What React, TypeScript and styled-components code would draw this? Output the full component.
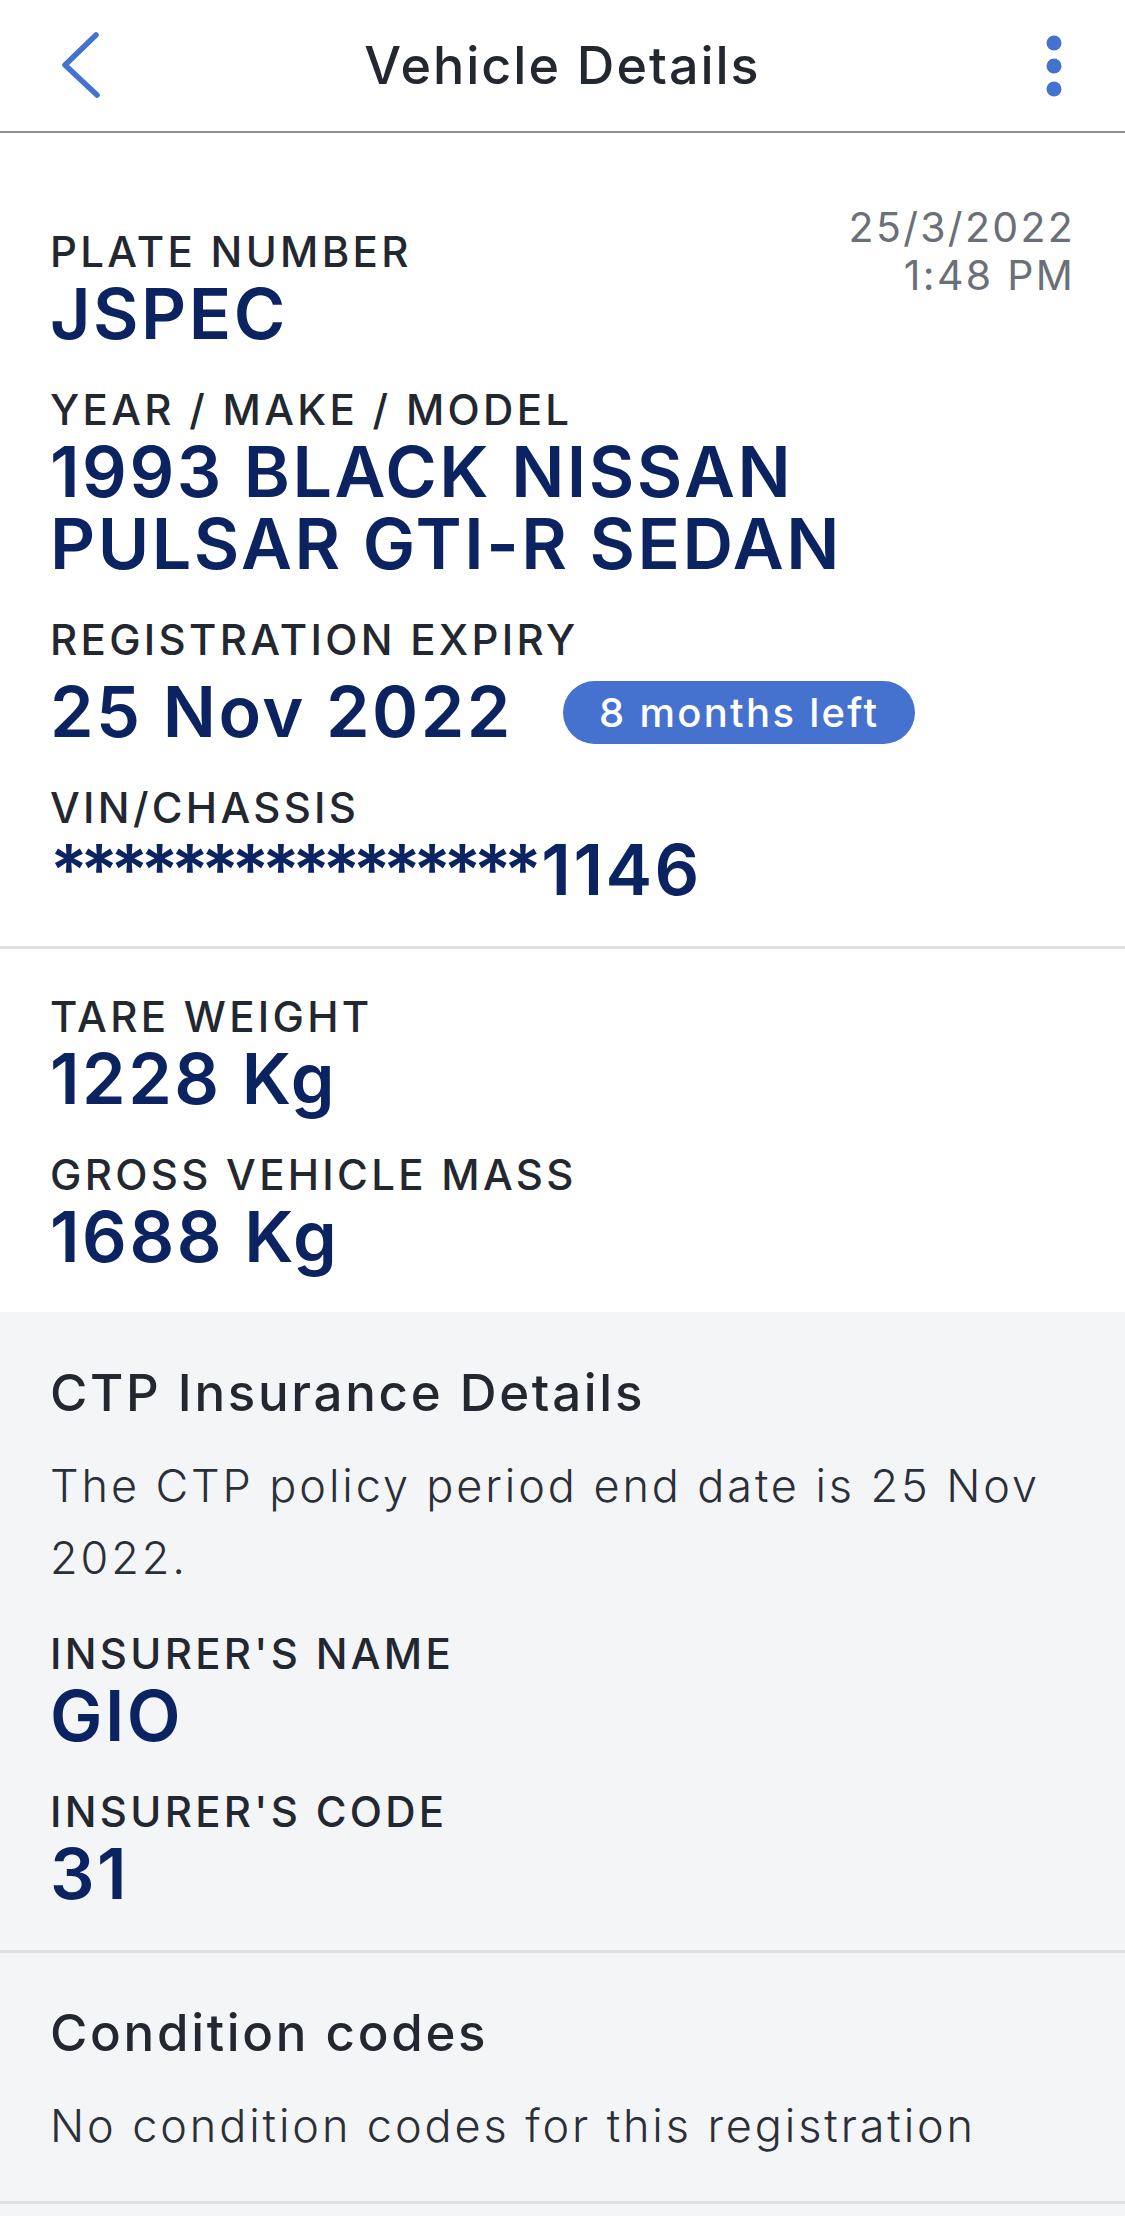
import styled, { createGlobalStyle } from "styled-components";

const GlobalStyle = createGlobalStyle`
  body {
    margin: 0;
    background: #f4f5f7;
    font-family: "Inter", "Liberation Sans", sans-serif;
    -webkit-font-smoothing: antialiased;
  }
`;

const Page = styled.div`
  width: 1125px;
  display: flex;
  flex-direction: column;
  background: #ffffff;
`;

const Header = styled.header`
  height: 131px;
  display: grid;
  grid-template-columns: 1fr auto 1fr;
  align-items: center;
  border-bottom: 2px solid #8c8d91;
  background: #ffffff;
`;

const HeaderButton = styled.button<{ $align: "start" | "end" }>`
  justify-self: ${({ $align }) => $align};
  display: flex;
  align-items: center;
  background: none;
  border: 0;
  padding: 0;
  margin: ${({ $align }) => ($align === "start" ? "0 0 0 60px" : "0 63px 0 0")};
  cursor: pointer;
`;

const Title = styled.h1`
  margin: 0;
  font-size: 52px;
  font-weight: 500;
  line-height: 60px;
  color: #23272f;
  letter-spacing: 2px;
`;

const Section = styled.section<{ $tone?: "white" | "gray"; $pad: string; $divider?: boolean }>`
  display: flex;
  flex-direction: column;
  gap: 39px;
  padding: ${({ $pad }) => $pad};
  background: ${({ $tone }) => ($tone === "gray" ? "#f4f5f7" : "#ffffff")};
  border-bottom: ${({ $divider }) => ($divider ? "3px solid #dfe0e4" : "none")};
`;

const TopRow = styled.div`
  display: flex;
  justify-content: space-between;
  align-items: flex-start;
`;

const Field = styled.div`
  display: flex;
  flex-direction: column;
  gap: 5px;
`;

const Label = styled.div`
  font-size: 42px;
  line-height: 42px;
  font-weight: 500;
  letter-spacing: 3.3px;
  color: #23272f;
  text-transform: uppercase;
`;

const Value = styled.div`
  font-size: 70px;
  line-height: 72px;
  font-weight: 600;
  letter-spacing: 2.5px;
  color: #0b2461;
`;

const Masked = styled.span`
  letter-spacing: -7.5px;
  margin-right: 7px;
`;

const ValueRow = styled.div`
  display: flex;
  align-items: center;
  gap: 50px;
  margin-top: 10px;
`;

const Badge = styled.span`
  height: 63px;
  display: inline-flex;
  align-items: center;
  padding: 0 36px;
  border-radius: 32px;
  background: #4672cf;
  color: #ffffff;
  font-size: 40px;
  font-weight: 500;
  letter-spacing: 2.3px;
`;

const Timestamp = styled.div`
  margin-top: -28px;
  text-align: right;
  font-size: 41px;
  line-height: 48px;
  font-weight: 400;
  letter-spacing: 2.3px;
  color: #6b6f77;
`;

const Block = styled.div`
  display: flex;
  flex-direction: column;
  gap: 27px;
`;

const SectionTitle = styled.h2`
  margin: 0;
  font-size: 51px;
  line-height: 60px;
  font-weight: 500;
  letter-spacing: 2.7px;
  color: #23272f;
`;

const Body = styled.p`
  margin: 0;
  font-size: 45px;
  line-height: 72px;
  font-weight: 300;
  letter-spacing: 2.9px;
  color: #2b2f38;
`;

const BackIcon = () => (
  <svg width="44" height="70" viewBox="0 0 44 70">
    <polyline
      points="36,4 5,34 37,64"
      fill="none"
      stroke="#4472d0"
      strokeWidth="5.5"
      strokeLinecap="round"
      strokeLinejoin="round"
    />
  </svg>
);

const MoreIcon = () => (
  <svg width="16" height="62" viewBox="0 0 16 62">
    <circle cx="8" cy="8" r="7.5" fill="#4472d0" />
    <circle cx="8" cy="31" r="7.5" fill="#4472d0" />
    <circle cx="8" cy="54" r="7.5" fill="#4472d0" />
  </svg>
);

export default function App() {
  return (
    <>
      <GlobalStyle />
      <Page>
        <Header>
          <HeaderButton $align="start" aria-label="Back">
            <BackIcon />
          </HeaderButton>
          <Title>Vehicle Details</Title>
          <HeaderButton $align="end" aria-label="More">
            <MoreIcon />
          </HeaderButton>
        </Header>

        <Section $pad="98px 50px 40px" $divider>
          <TopRow>
            <Field>
              <Label>Plate Number</Label>
              <Value>JSPEC</Value>
            </Field>
            <Timestamp>
              25/3/2022
              <br />
              1:48 PM
            </Timestamp>
          </TopRow>
          <Field>
            <Label>Year / Make / Model</Label>
            <Value>1993 BLACK NISSAN PULSAR GTI-R SEDAN</Value>
          </Field>
          <Field>
            <Label>Registration Expiry</Label>
            <ValueRow>
              <Value>25 Nov 2022</Value>
              <Badge>8 months left</Badge>
            </ValueRow>
          </Field>
          <Field>
            <Label>VIN/Chassis</Label>
            <Value>
              <Masked>****************</Masked>1146
            </Value>
          </Field>
        </Section>

        <Section $pad="47px 50px 39px">
          <Field>
            <Label>Tare Weight</Label>
            <Value>1228 Kg</Value>
          </Field>
          <Field>
            <Label>Gross Vehicle Mass</Label>
            <Value>1688 Kg</Value>
          </Field>
        </Section>

        <Section $tone="gray" $pad="51px 50px 40px" $divider>
          <Block>
            <SectionTitle>CTP Insurance Details</SectionTitle>
            <Body>The CTP policy period end date is 25 Nov 2022.</Body>
          </Block>
          <Field>
            <Label>Insurer's Name</Label>
            <Value>GIO</Value>
          </Field>
          <Field>
            <Label>Insurer's Code</Label>
            <Value>31</Value>
          </Field>
        </Section>

        <Section $tone="gray" $pad="50px 50px 39px" $divider>
          <Block>
            <SectionTitle>Condition codes</SectionTitle>
            <Body>No condition codes for this registration</Body>
          </Block>
        </Section>
      </Page>
    </>
  );
}
